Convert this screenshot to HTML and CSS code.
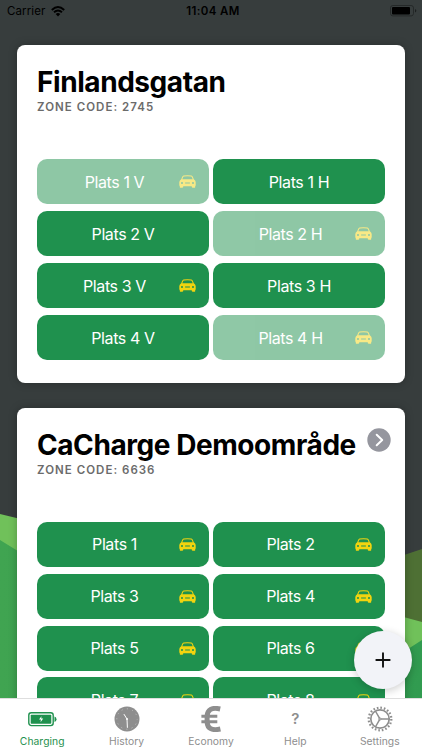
FILE: index.html
```html
<!DOCTYPE html>
<html lang="sv">
<head>
    <meta charset="UTF-8">
    <meta name="viewport" content="width=device-width, initial-scale=1.0">
    <title>CaCharge</title>
    <link rel="stylesheet" href="styles.css">
</head>
<body>
    <!-- Shared icons -->
    <svg class="sprite">
        <symbol id="car" viewBox="0 0 17 13">
            <path fill="currentColor" fill-rule="evenodd" d="M4.6 .5Q8.5-.1 12.4 .5Q13.4 .8 13.9 2L14.8 4.2Q16.5 5.4 16.7 7V10.8H16.2V12.2Q16 12.7 15.2 12.7H13.7Q13 12.7 12.8 12.1V11.3H4.2V12.1Q4 12.7 3.3 12.7H1.8Q1 12.7 .8 12.2V10.8H.3V7Q.5 5.4 2.2 4.2L3.1 2Q3.6 .8 4.6 .5ZM5 1.5Q4.3 1.7 4 2.4L3.3 4.2H13.7L13 2.4Q12.7 1.7 12 1.5Q8.5 1 5 1.5ZM3 7A1 1 0 1 0 3 9A1 1 0 1 0 3 7ZM14 7A1 1 0 1 0 14 9A1 1 0 1 0 14 7ZM6.3 7.5Q5.7 8 6.3 8.5H10.7Q11.3 8 10.7 7.5Z"/>
        </symbol>
    </svg>

    <div class="app">
        <!-- Hills behind the cards -->
        <svg class="backdrop" viewBox="0 0 422 750">
            <defs>
                <linearGradient id="hill" x1="0" x2="1" y1="0" y2="0">
                    <stop offset="0" stop-color="#40a451"/>
                    <stop offset="1" stop-color="#319b50"/>
                </linearGradient>
            </defs>
            <path fill="#4e7034" d="M422 549L380 563V750H422Z"/>
            <path fill="#70c15a" d="M0 514L211 565L422 622V750H0Z"/>
            <path fill="url(#hill)" d="M0 540L211 670L380 667L422 640V750H0Z"/>
        </svg>

        <header class="status">
            <div class="carrier">
                <span>Carrier</span>
                <svg width="14" height="11" viewBox="0 0 14 11">
                    <path d="M.8 4Q7-1.8 13.2 4M3 6.3Q7 2.7 11 6.3" fill="none" stroke="#000" stroke-width="1.9"/>
                    <path d="M4.7 8Q7 6.1 9.3 8L7 10.4Z"/>
                </svg>
            </div>
            <div class="time">11:04 AM</div>
            <div class="battery">
                <svg width="27" height="12" viewBox="0 0 27 12">
                    <rect x=".5" y=".5" width="23" height="10.4" rx="2.4" fill="none" stroke="#1c1f1f" stroke-opacity=".65"/>
                    <rect x="2" y="2" width="18" height="7.4" rx="1"/>
                    <path d="M25 4Q26.3 4.6 26.3 5.7T25 7.4Z" fill="#1c1f1f"/>
                </svg>
            </div>
        </header>

        <main class="zones">
            <section class="card">
                <div class="card-head">
                    <h2>Finlandsgatan</h2>
                </div>
                <p class="code">ZONE CODE: 2745</p>
                <div class="spots">
                    <div class="spot busy"><span>Plats 1 V</span><svg class="car"><use href="#car"/></svg></div>
                    <div class="spot"><span>Plats 1 H</span></div>
                    <div class="spot"><span>Plats 2 V</span></div>
                    <div class="spot busy"><span>Plats 2 H</span><svg class="car"><use href="#car"/></svg></div>
                    <div class="spot"><span>Plats 3 V</span><svg class="car"><use href="#car"/></svg></div>
                    <div class="spot"><span>Plats 3 H</span></div>
                    <div class="spot"><span>Plats 4 V</span></div>
                    <div class="spot busy"><span>Plats 4 H</span><svg class="car"><use href="#car"/></svg></div>
                </div>
            </section>

            <section class="card">
                <div class="card-head">
                    <h2>CaCharge Demoområde</h2>
                    <svg class="more" width="24" height="24" viewBox="0 0 24 24">
                        <circle cx="12" cy="12" r="11.7" fill="#95969e"/>
                        <path d="M9.7 6.8L15.2 12L9.7 17.2" fill="none" stroke="#fff" stroke-width="2" stroke-linecap="round" stroke-linejoin="round"/>
                    </svg>
                </div>
                <p class="code">ZONE CODE: 6636</p>
                <div class="spots">
                    <div class="spot"><span>Plats 1</span><svg class="car"><use href="#car"/></svg></div>
                    <div class="spot"><span>Plats 2</span><svg class="car"><use href="#car"/></svg></div>
                    <div class="spot"><span>Plats 3</span><svg class="car"><use href="#car"/></svg></div>
                    <div class="spot"><span>Plats 4</span><svg class="car"><use href="#car"/></svg></div>
                    <div class="spot"><span>Plats 5</span><svg class="car"><use href="#car"/></svg></div>
                    <div class="spot"><span>Plats 6</span><svg class="car"><use href="#car"/></svg></div>
                    <div class="spot"><span>Plats 7</span><svg class="car"><use href="#car"/></svg></div>
                    <div class="spot"><span>Plats 8</span><svg class="car"><use href="#car"/></svg></div>
                </div>
            </section>
        </main>

        <button class="add" aria-label="Add">
            <svg width="16" height="16" viewBox="0 0 16 16">
                <path d="M8 1.3V14.7M1.3 8H14.7" stroke="#111" stroke-width="1.9" stroke-linecap="round"/>
            </svg>
        </button>

        <nav class="tabs">
            <a class="tab active">
                <svg width="29" height="26" viewBox="0 0 29 26">
                    <rect x=".8" y="6.8" width="24.4" height="12.8" rx="2.5" fill="none" stroke="currentColor" stroke-width="1.4"/>
                    <rect x="2.7" y="8.7" width="20.6" height="9" rx=".7" fill="currentColor"/>
                    <path d="M26.5 10.4Q28.5 11 28.5 13.2T26.5 16Z" fill="currentColor"/>
                    <path d="M13.5 10.2L11 13.6H12.9L12.6 16.2L15.2 12.6H13.2Z" fill="#fff"/>
                </svg>
                <span>Charging</span>
            </a>
            <a class="tab">
                <svg width="26" height="26" viewBox="0 0 26 26">
                    <circle cx="13" cy="13" r="12.5" fill="currentColor"/>
                    <circle cx="13" cy="13" r="10.2" fill="none" stroke="#ccc" stroke-width="1" stroke-dasharray=".9 4.44" stroke-dashoffset=".45"/>
                    <path d="M13.4 21.8L13 13L9.9 8.1" fill="none" stroke="#fff" stroke-width="1"/>
                    <circle cx="13" cy="13" r="1" fill="#fff"/>
                </svg>
                <span>History</span>
            </a>
            <a class="tab">
                <svg width="26" height="26" viewBox="0 0 26 26">
                    <path d="M22.2 3Q9.6 .2 9.1 10V16Q9.6 25.8 22.4 23" fill="none" stroke="currentColor" stroke-width="5"/>
                    <path d="M3.4 10.2H19.3M3.4 15.8H19.3" stroke="currentColor" stroke-width="3"/>
                </svg>
                <span>Economy</span>
            </a>
            <a class="tab">
                <div class="question">?</div>
                <span>Help</span>
            </a>
            <a class="tab">
                <svg width="26" height="26" viewBox="0 0 26 26" fill="none" stroke="currentColor">
                    <circle cx="13" cy="13" r="9.2" stroke-width="1.7"/>
                    <circle cx="13" cy="13" r="11.3" stroke-width="2.3" stroke-dasharray="1.6 1.95"/>
                    <path d="M13.8 13H22M12.6 12.3L8.4 5M12.6 13.7L8.4 21" stroke-width="1.5"/>
                    <circle cx="12.9" cy="13" r="1.1" stroke-width="1"/>
                </svg>
                <span>Settings</span>
            </a>
        </nav>
    </div>
</body>
</html>
```

FILE: styles.css
```css
* {
    box-sizing: border-box;
}
body {
    margin: 0;
    font-family: Inter, "Liberation Sans", sans-serif;
    color: #000;
}
.sprite {
    display: none;
}
.app {
    position: relative;
    width: 422px;
    height: 750px;
    overflow: hidden;
    display: flex;
    flex-direction: column;
    background: #373d3d;
}
.backdrop {
    position: absolute;
    top: 0;
    left: 0;
    width: 422px;
    height: 750px;
}

/* Status bar */
.status {
    position: relative;
    flex: none;
    height: 22px;
    padding: 0 5px 0 7px;
    display: grid;
    grid-template-columns: 1fr auto 1fr;
    align-items: center;
    font-size: 11.5px;
    line-height: 22px;
}
.carrier {
    display: flex;
    align-items: center;
    gap: 6px;
    letter-spacing: 0.1px;
}
.time {
    font-weight: 600;
    letter-spacing: 0.4px;
    padding-left: 2px;
}
.battery {
    display: flex;
    justify-content: flex-end;
}

/* Zone cards */
.zones {
    position: relative;
    flex: 1;
    min-height: 0;
    overflow: hidden;
    padding: 23px 16.6px 0;
    display: flex;
    flex-direction: column;
    gap: 24.6px;
}
.card {
    flex: none;
    background: #fff;
    border-radius: 8px;
    padding: 19px 20.4px 22.7px;
    box-shadow: 0 0 8px rgba(0, 0, 0, 0.25);
}
.card-head {
    display: flex;
    justify-content: space-between;
    margin-right: -6px;
}
h2 {
    margin: 0;
    font-size: 28px;
    line-height: 36px;
    font-weight: 700;
    letter-spacing: -0.43px;
    white-space: nowrap;
}
.more {
    flex: none;
    margin-top: 1px;
}
.code {
    margin: 0;
    font-size: 11.5px;
    line-height: 14px;
    font-weight: 600;
    letter-spacing: 1.03px;
    color: #6b6b6b;
}
.spots {
    margin-top: 45px;
    display: grid;
    grid-template-columns: 1fr 1fr;
    grid-auto-rows: 45.3px;
    gap: 6.7px 4px;
}
.spot {
    display: flex;
    align-items: center;
    padding: 0 13px;
    border-radius: 10px;
    background: #1f914e;
    color: #fff;
    font-size: 16px;
    font-weight: 430;
    letter-spacing: -0.4px;
}
.spot span {
    flex: 1;
    text-align: center;
}
.spot.busy {
    opacity: 0.5;
}
.car {
    width: 17px;
    height: 13px;
    color: #f2d40f;
}

/* Floating button */
.add {
    position: absolute;
    left: 354px;
    top: 631px;
    width: 58px;
    height: 58px;
    padding: 0;
    border: none;
    border-radius: 50%;
    background: #f2f3f8;
    box-shadow: 0 2px 8px rgba(0, 0, 0, 0.2);
    display: flex;
    align-items: center;
    justify-content: center;
}

/* Tab bar */
.tabs {
    position: relative;
    flex: none;
    height: 52px;
    padding-top: 7px;
    display: grid;
    grid-template-columns: repeat(5, 1fr);
    background: #fff;
    border-top: 1px solid #dedede;
}
.tab {
    display: flex;
    flex-direction: column;
    align-items: center;
    color: #8e8e8e;
    font-size: 10.3px;
    line-height: 14px;
    letter-spacing: 0.05px;
}
.tab span {
    margin-top: 2px;
}
.tab.active {
    color: #1f914e;
}
.question {
    height: 26px;
    font-size: 15px;
    line-height: 26px;
    font-weight: 600;
}
```
